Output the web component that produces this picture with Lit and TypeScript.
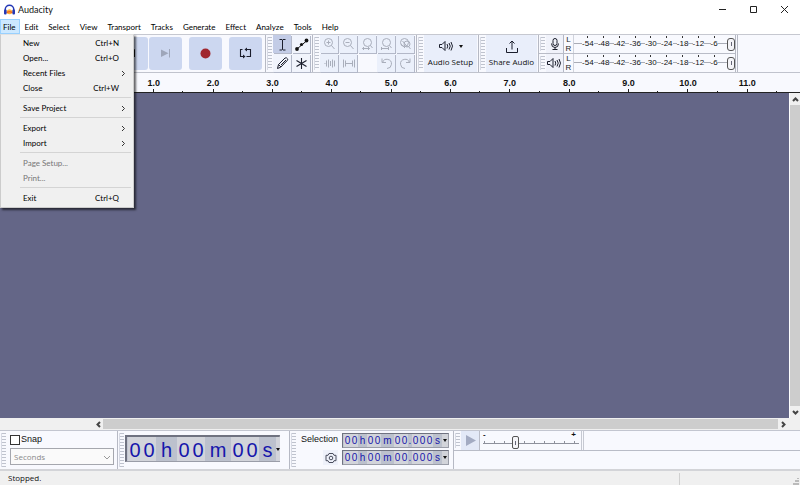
import { LitElement, html, svg, css } from "lit";
import { customElement, property } from "lit/decorators.js";

const MENUS = ["File", "Edit", "Select", "View", "Transport", "Tracks", "Generate", "Effect", "Analyze", "Tools", "Help"];

type Entry = { label: string; keys?: string; sub?: boolean; off?: boolean };
const FILE_MENU: Entry[][] = [
  [
    { label: "New", keys: "Ctrl+N" },
    { label: "Open...", keys: "Ctrl+O" },
    { label: "Recent Files", sub: true },
    { label: "Close", keys: "Ctrl+W" },
  ],
  [{ label: "Save Project", sub: true }],
  [{ label: "Export", sub: true }, { label: "Import", sub: true }],
  [{ label: "Page Setup...", off: true }, { label: "Print...", off: true }],
  [{ label: "Exit", keys: "Ctrl+Q" }],
];

const lens = svg`<circle cx="8.5" cy="7.5" r="4"/><path d="M11.500 10.500l3 3.500"/>`;

const ICONS = {
  logo: svg`<path d="M2.200 8V6.500a4.300 4.300 0 0 1 8.600 0V8" fill="none" stroke="#2337b5" stroke-width="1.500"/><path d="M3.500 8q3-3.500 6 0v2q-3 2.500-6 0z" fill="#fbb03a"/><path d="M3.500 9.500q3-1.500 6 0" fill="none" stroke="#e8501a" stroke-width="1.200"/><rect x="1" y="6.500" width="2.600" height="5" rx="1" fill="#2337b5"/><rect x="9.400" y="6.500" width="2.600" height="5" rx="1" fill="#2337b5"/>`,
  pause: svg`<path d="M11 9h4v14h-4zM18 9h4v14h-4z" fill="#111"/>`,
  play: svg`<path d="M11 9l12 7-12 7z" fill="#111"/>`,
  stop: svg`<path d="M11 11h10v10H11z" fill="#111"/>`,
  start: svg`<path d="M20 12v8l-7-4zM11 12h1v8h-1z" fill="#111"/><path d="M19 13h1v7h-1z" fill="#111"/>`,
  end: svg`<path d="M12 12.500l7.500 3.700-7.500 3.700z" fill="#9ea6ba"/><path d="M20.500 12v8.500" stroke="#9ea6ba"/>`,
  record: svg`<circle cx="16.500" cy="16.500" r="5" fill="#a0262e"/>`,
  loop: svg`<g fill="none" stroke="#1b1e2c" stroke-width="1.100"><path d="M13.500 12.500h-2v7h4M17.500 19.500h4v-7h-5"/></g><path d="M14 17.500l2.500 2-2.500 2zM18 10.500l-2.500 2 2.500 2z" fill="#1b1e2c"/>`,
  ibeam: svg`<path d="M6.500 4.500h2.500l.5.500.5-.5h2.500M9.500 5v9.500M6.500 15h2.500l.5-.5.5.500h2.500" fill="none" stroke="#1b1e2c"/>`,
  envelope: svg`<path d="M5 14l10-8.500" stroke="#111" stroke-width="1"/><circle cx="5" cy="14" r="1.900" fill="#111"/><circle cx="14.500" cy="5.500" r="1.900" fill="#111"/><circle cx="9.500" cy="9.500" r="1.600" fill="#111"/>`,
  pencil: svg`<path d="M4.500 14.500l1-4 6.500-6.500q1.500-.8 2.500.8.600 1-.3 1.800l-6.500 6.600zM5.500 10.500l2.500 2.500M8 11l5-5" fill="none" stroke="#1b1e2c"/>`,
  multi: svg`<path d="M9.500 4v11M4.500 6.500l10 6M14.500 6.500l-10 6" stroke="#1b1e2c" stroke-width="1.100"/>`,
  zoomin: svg`${lens}<path d="M6.500 7.500h4M8.500 5.500v4"/>`,
  zoomout: svg`${lens}<path d="M6.500 7.500h4"/>`,
  fitsel: svg`<circle cx="9.500" cy="7.500" r="4"/><path d="M12.500 10.500l2 2.500M4.500 13.500h7M6 12l-1.500 1.500L6 15M10 12l1.500 1.500L10 15"/>`,
  fitproj: svg`<circle cx="9.500" cy="7.500" r="4"/><path d="M12.500 10.500l2 2.500M4 13.500h8M4.500 12v3M11.500 12v3"/>`,
  toggle: svg`<circle cx="8.500" cy="7.500" r="4"/><circle cx="11" cy="9" r="3"/><path d="M6.500 6l5 6M12.500 11.500l2 2.500M5 9l4 4"/>`,
  trim: svg`<path d="M4.500 9.500h1M6.500 6.500v6M8.500 5.500v8M10.500 7v5M12.500 5.500v8M14.500 6.500v6"/>`,
  silence: svg`<path d="M4.500 5.500v8M6.500 6.500v6M6.500 9.500h7M13.500 6.500v6M15.500 5.500v8"/>`,
  undo: svg`<path d="M5 4.500v4h4M5.500 8.500a4.600 4.600 0 1 1 4.500 6"/>`,
  redo: svg`<path d="M14 4.500v4h-4M13.500 8.500a4.600 4.600 0 1 0-4.500 6"/>`,
  speaker: svg`<path d="M1.500 5.500H4l3-3v9l-3-3H1.500zM9 5q1.500 2 0 4.500M11 4q2.500 3 0 6.500M13 3q3 4 0 8.500" fill="none" stroke="#1b1e2c"/>`,
  share: svg`<path d="M2.500 9v4.500h11V9M8 10.500V2M5.500 4.500L8 2l2.500 2.500" fill="none" stroke="#1b1e2c"/>`,
  mic: svg`<rect x="5" y="1.500" width="4" height="7" rx="2" fill="none" stroke="#1b1e2c"/><path d="M3.500 6.500q0 4 3.500 4t3.500-4M7 10.500v2M4.500 12.500h5" fill="none" stroke="#1b1e2c"/>`,
  gear: svg`<path d="M4 1.500h4l1 1.800h2v5.400H9L8 10.500H4L3 8.700H1V3.300h2z" fill="none" stroke="#4a4e5e"/><circle cx="6" cy="6" r="1.800" fill="none" stroke="#4a4e5e"/>`,
};
type IconName = keyof typeof ICONS;

const icon = (name: IconName, w: number, h = w) =>
  html`<svg width=${w} height=${h} viewBox="0 0 ${w} ${h}" aria-hidden="true">${ICONS[name]}</svg>`;

const TRANSPORT: [IconName, string][] = [
  ["pause", "Pause"], ["play", "Play"], ["stop", "Stop"], ["start", "Skip to Start"], ["end", "Skip to End"],
];
const TOOLS: [IconName, string][] = [
  ["ibeam", "Selection Tool"], ["envelope", "Envelope Tool"], ["pencil", "Draw Tool"], ["multi", "Multi-Tool"],
];
const EDIT: ([IconName, string] | null)[] = [
  ["zoomin", "Zoom In"], ["zoomout", "Zoom Out"], ["fitsel", "Fit Selection"], ["fitproj", "Fit Project"], ["toggle", "Zoom Toggle"],
  ["trim", "Trim"], ["silence", "Silence"], null, ["undo", "Undo"], ["redo", "Redo"],
];

/** Level meter with its L/R labels, dB scale and volume handle. */
@customElement("level-meter")
class LevelMeter extends LitElement {
  @property() kind: "mic" | "speaker" = "mic";

  static styles = css`
    :host { display: flex; flex: 1; }
    button { all: unset; width: 17px; display: flex; align-items: center; justify-content: center; background: #f0f2fa; border-right: 1px solid #b4b8c6; }
    .lr { width: 9px; font-size: 8px; line-height: 9px; text-align: center; display: flex; flex-direction: column; justify-content: center; color: #222; }
    .bar { position: relative; flex: 1; display: flex; border-left: 1px solid #d0d3dc; padding: 0 13px 0 6px; }
    .scale { flex: 1; display: grid; grid-template-columns: repeat(9, 1fr); position: relative; z-index: 1; }
    .db { display: flex; flex-direction: column; align-items: center; font-size: 8px; line-height: 9px; color: #111; padding-top: 1px; }
    .db::before { content: ""; width: 1px; height: 2px; background: #333; margin-bottom: 1px; }
    .num { background: #f8f9fe; }
    input { position: absolute; inset: 0; margin: 0; width: 100%; height: 100%; appearance: none; background: linear-gradient(#a9acb6, #a9acb6) 0 8px / 100% 1px no-repeat; }
    input::-webkit-slider-thumb { appearance: none; width: 8px; height: 13px; box-sizing: border-box; border: 1px solid #555; border-radius: 3px; background: linear-gradient(#667, #667) center / 1px 4px no-repeat #f4f4f8; }
  `;

  render() {
    return html`
      <button aria-label=${this.kind === "mic" ? "Record Meter" : "Playback Meter"}>${icon(this.kind, this.kind === "mic" ? 14 : 17, 14)}</button>
      <div class="lr"><span>L</span><span>R</span></div>
      <div class="bar">
        <div class="scale">
          ${[-54, -48, -42, -36, -30, -24, -18, -12, -6].map((n) => html`<div class="db"><span class="num">${n}</span></div>`)}
        </div>
        <input type="range" min="0" max="100" value="100" aria-label="Volume" />
      </div>
    `;
  }
}

/** Numeric time display, alternating digit and unit fields. */
@customElement("time-field")
class TimeField extends LitElement {
  @property() parts = "";
  @property() label = "";
  @property({ type: Boolean, reflect: true }) large = false;

  static styles = css`
    :host { display: flex; box-sizing: border-box; height: 15px; border: 1px solid #9a9da8; border-top-color: #6f7280; border-left-color: #6f7280; background: #c3c7d2; color: #1616ab; font: 10px/14px "Liberation Sans", Arial, sans-serif; padding-left: 1px; }
    :host([large]) { height: 27px; font-size: 20px; line-height: 27px; border-width: 2px 1px 1px 2px; }
    .seg { display: flex; background: #d2d4da; }
    .seg.unit { background: #bcc1cd; }
    .ch { width: 7px; text-align: center; }
    .unit .ch { width: 9px; }
    .m .ch { width: 13px; }
    .dot .ch { width: 4px; }
    :host([large]) .ch { width: 14px; }
    :host([large]) .h .ch { width: 21px; }
    :host([large]) .m .ch { width: 26px; }
    :host([large]) .s .ch { width: 17px; }
    button { all: unset; flex: 1; background: #d2d4da; display: flex; align-items: center; justify-content: center; }
    button::before { content: ""; border: 2px solid transparent; border-top: 3px solid #111; border-bottom: 0; }
  `;

  render() {
    return html`
      ${this.parts.split(" ").map((p) => {
        const kind = /\d/.test(p) ? "" : p === "." ? "unit dot" : "unit " + p;
        return html`<span class="seg ${kind}">${[...p].map((c) => html`<span class="ch">${c}</span>`)}</span>`;
      })}
      <button aria-label=${this.label + " format"}></button>
    `;
  }
}

@customElement("app-root")
class AppRoot extends LitElement {
  static styles = css`
    :host { display: flex; flex-direction: column; min-height: 100vh; background: #f8f9fe; color: #111; font: 8px/15px "Open Sans", "Noto Sans", sans-serif; overflow: hidden; }
    button { all: unset; box-sizing: border-box; }
    svg { display: block; flex: none; }
    .title { display: flex; align-items: center; height: 19px; background: #fff; padding-left: 3px; }
    .name { flex: 1; font: 9px/18px Lato, sans-serif; margin-left: 2px; }
    .win { width: 31px; height: 19px; display: flex; align-items: center; justify-content: center; }
    .menubar { display: flex; position: relative; z-index: 2; height: 15px; background: #fff; font-family: Lato, "Open Sans", sans-serif; color: #000; }
    .top { padding: 1px 5px 0; line-height: 14px; }
    .top:first-child { padding: 1px 4px 0 3px; }
    .top.open { background: #cce8ff; box-shadow: inset 0 0 0 1px #99d1ff; }
    .menu { position: absolute; left: 0; top: 15px; width: 134px; box-sizing: border-box; background: #f0f0f0; border: 1px solid #ccc; border-top-color: #e2e2e2; padding-bottom: 2px; box-shadow: 2px 2px 2px #0009; }
    .group + .group { margin-top: 2px; }
    .group + .group::before { content: ""; display: block; height: 1px; background: #d4d4d4; margin: 0 2px 2px 19px; }
    .item { display: flex; align-items: center; width: 100%; height: 15px; padding: 1px 14px 0 22px; line-height: 14px; }
    .item.off { color: #777; }
    .lab { flex: 1; }
    .item.sub { padding-right: 6px; }
    .bars { display: flex; height: 39px; box-sizing: border-box; border-top: 1px solid #c6c8d0; border-bottom: 1px solid #c0c3cd; }
    .bar { display: flex; border-right: 1px solid #b6b9c4; padding-right: 2px; }
    .grip { width: 5px; margin: 2px 1px; flex: none; background: repeating-linear-gradient(#bfc3ce 0 1px, transparent 1px 3px); border-left: 1px solid #d7dae4; box-sizing: border-box; }
    .transport { align-items: center; gap: 1px; padding: 0 3px 0 5px; }
    .transport .grip { align-self: stretch; }
    .big { width: 33px; height: 33px; border-radius: 3px; background: #ccd7f0; display: flex; }
    .gap { margin-left: 6px; }
    .cells { display: grid; grid-auto-rows: 18px; gap: 1px; }
    .two { grid-template-columns: repeat(2, 18px); }
    .five { grid-template-columns: repeat(5, 18px); }
    .cell { background: #f1f4fc; box-shadow: 1px 1px 0 #b3b8c8; }
    .cell.on { background: #c3cce6; }
    .five .cell { fill: none; stroke: #a9aebb; background: #ebf0fb; }
    .card { display: flex; flex-direction: column; align-items: center; justify-content: space-between; background: #e9eefa; padding: 4px 0; line-height: 12px; text-align: center; }
    .slim { padding-right: 1px; }
    .setup { width: 53px; }
    .share { width: 51px; }
    .row { display: flex; align-items: center; gap: 4px; }
    .caret { border: 2px solid transparent; border-top: 3px solid #111; border-bottom: 0; }
    .meters { width: 196px; border-right: 3px double #b6b9c4; padding-right: 0; }
    .meters .stack { display: flex; flex-direction: column; flex: 1; font-family: "Liberation Sans", Arial, sans-serif; }
    .mrow { display: flex; flex: 1; }
    .mrow + .mrow { border-top: 1px solid #b9bcc7; }
    .ruler { display: grid; grid-template-columns: repeat(11, 1fr); height: 20px; box-sizing: border-box; padding: 0 23px 0 124px; border-bottom: 1px solid #222; font: bold 9px/20px "Liberation Sans", Arial, sans-serif; text-align: center; }
    .mark { background: linear-gradient(#222, #222) 50% 100% / 1px 4px no-repeat, linear-gradient(#222, #222) 100% 100% / 1px 2px no-repeat; }
    .work { flex: 1; display: grid; grid-template-columns: 1fr 11px; grid-template-rows: 1fr 12px; background: #f0f0f0; }
    .tracks { background: #646687; min-height: 100px; }
    .vs { display: flex; flex-direction: column; align-items: center; border-left: 1px solid #fff; }
    .hs { display: flex; align-items: center; padding: 1px 1px 1px 93px; }
    .thumb { flex: 1; background: #cdcdcd; align-self: stretch; }
    .arrow { width: 10px; height: 10px; display: flex; align-items: center; justify-content: center; }
    .vs .arrow { height: 12px; }
    .sub svg { fill: none; stroke: #333; stroke-width: 1; }
    .arrow svg { fill: none; stroke: #444; stroke-width: 2; }
    .bottom { display: flex; height: 39px; box-sizing: border-box; border-top: 1px solid #c3c6d0; font-family: "Liberation Sans", Arial, sans-serif; }
    .bottom .bar { padding: 0; }
    .snap { width: 118px; box-sizing: border-box; }
    .snapbox { display: flex; flex-direction: column; flex: 1; padding: 0 3px; }
    .check { display: flex; align-items: center; height: 17px; font-size: 9px; }
    .check input { appearance: none; width: 10px; height: 10px; margin: 0 1px 0 0; border: 1px solid #333; background: #fff; }
    .pick { display: flex; position: relative; }
    .pick svg { position: absolute; right: 3px; top: 7px; fill: none; stroke: #999; }
    select { appearance: none; width: 100%; height: 17px; border: 1px solid #a5a7ae; border-radius: 0; background: #fafafa; color: #8a8a8a; opacity: 1; font: 8px "Open Sans", sans-serif; padding: 0 3px; }
    .time time-field { width: 155px; margin: 4px 9px 0 0; }
    .selbox { display: grid; grid-template-columns: 44px 107px; column-gap: 1px; row-gap: 2px; align-content: start; padding: 2px 4px 0 0; font-size: 9px; }
    .selbox span, .gearbtn { justify-self: end; }
    .selbox span { line-height: 13px; padding-right: 3px; }
    .gearbtn { width: 15px; height: 15px; display: flex; align-items: center; justify-content: center; margin-right: 3px; background: #eef1fa; }
    .speedwrap { flex: 1; }
    .speed { display: flex; height: 19px; border-bottom: 1px solid #b9bcc7; }
    .playat { width: 19px; background: #e3e9f7; display: flex; align-items: center; justify-content: center; border-right: 1px solid #b9bcc7; }
    .slide { display: flex; position: relative; width: 104px; border-right: 3px double #c6c9d2; padding: 0 0 0 3px; box-sizing: border-box; }
    .pm { position: absolute; inset: 0 5px 0 3px; display: flex; justify-content: space-between; line-height: 8px; font-size: 8px; font-weight: bold; }
    .slide input { appearance: none; width: 96px; height: 18px; margin: 0; background: linear-gradient(#8e919c, #8e919c) 0 12px / 100% 1px no-repeat, repeating-linear-gradient(90deg, #8e919c 0 1px, transparent 1px 10px) 1px 10px / 100% 2px no-repeat; }
    .slide input::-webkit-slider-thumb { appearance: none; width: 7px; height: 13px; margin-top: 5px; box-sizing: border-box; border: 1px solid #555; border-radius: 2px; background: linear-gradient(#667, #667) center / 1px 4px no-repeat #f4f4f8; }
    .status { display: flex; height: 16px; box-sizing: border-box; border-top: 2px solid #d3d4d8; background: #f0f0f0; line-height: 13px; }
    .msg { flex: 1; padding-left: 8px; }
    .pane { width: 120px; display: flex; justify-content: flex-end; align-items: flex-end; border-left: 1px solid #d0d0d0; margin-top: 2px; }
  `;

  private chevron(d: string) {
    return html`<svg width="7" height="7" viewBox="0 0 7 7" aria-hidden="true"><path d=${d} /></svg>`;
  }

  render() {
    return html`
      <header class="title">
        ${icon("logo", 13)}<span class="name">Audacity</span>
        <button class="win" aria-label="Minimize"><svg width="9" height="9" viewBox="0 0 9 9"><path d="M1 4.500h7" stroke="#222" /></svg></button>
        <button class="win" aria-label="Maximize"><svg width="9" height="9" viewBox="0 0 9 9"><path d="M1.500 1.500h6v6h-6z" fill="none" stroke="#222" /></svg></button>
        <button class="win" aria-label="Close window"><svg width="9" height="9" viewBox="0 0 9 9"><path d="M1 1l7 7M8 1l-7 7" stroke="#222" /></svg></button>
      </header>
      <nav class="menubar">
        ${MENUS.map((m, i) => html`<button class="top ${i ? "" : "open"}">${m}</button>`)}
        <div class="menu" role="menu">
          ${FILE_MENU.map((g) => html`<div class="group">
            ${g.map((e) => html`<button role="menuitem" class="item ${e.off ? "off" : ""} ${e.sub ? "sub" : ""}" ?disabled=${e.off}>
              <span class="lab">${e.label}</span>${e.keys ? html`<span>${e.keys}</span>` : ""}${e.sub ? this.chevron("M2 1l2.500 2.500L2 6") : ""}
            </button>`)}
          </div>`)}
        </div>
      </nav>

      <section class="bars">
        <div class="bar transport">
          <div class="grip"></div>
          ${TRANSPORT.map(([n, l]) => html`<button class="big" aria-label=${l}>${icon(n, 33)}</button>`)}
          <button class="big gap" aria-label="Record">${icon("record", 33)}</button>
          <button class="big gap" aria-label="Loop">${icon("loop", 33)}</button>
        </div>
        <div class="bar">
          <div class="grip"></div>
          <div class="cells two">${TOOLS.map(([n, l], i) => html`<button class="cell ${i ? "" : "on"}" aria-label=${l}>${icon(n, 18)}</button>`)}</div>
        </div>
        <div class="bar">
          <div class="grip"></div>
          <div class="cells five">${EDIT.map((e) => (e ? html`<button class="cell" aria-label=${e[1]}>${icon(e[0], 18)}</button>` : html`<span></span>`))}</div>
        </div>
        <div class="bar slim">
          <div class="grip"></div>
          <button class="card setup"><span class="row">${icon("speaker", 17, 14)}<i class="caret"></i></span>Audio Setup</button>
        </div>
        <div class="bar slim">
          <div class="grip"></div>
          <button class="card share">${icon("share", 16, 15)}Share Audio</button>
        </div>
        <div class="bar meters">
          <div class="stack">
            <div class="mrow"><div class="grip"></div><level-meter kind="mic"></level-meter></div>
            <div class="mrow"><div class="grip"></div><level-meter kind="speaker"></level-meter></div>
          </div>
        </div>
      </section>

      <div class="ruler">
        ${Array.from({ length: 11 }, (_, i) => html`<span class="mark">${i + 1}.0</span>`)}
      </div>

      <main class="work">
        <div class="tracks"></div>
        <div class="vs">
          <button class="arrow" aria-label="Scroll up">${this.chevron("M1 5l2.500-2.500L6 5")}</button>
          <div class="thumb"></div>
          <button class="arrow" aria-label="Scroll down">${this.chevron("M1 2l2.500 2.500L6 2")}</button>
        </div>
        <div class="hs">
          <button class="arrow" aria-label="Scroll left">${this.chevron("M5 1L2.500 3.500 5 6")}</button>
          <div class="thumb"></div>
          <button class="arrow" aria-label="Scroll right">${this.chevron("M2 1l2.500 2.500L2 6")}</button>
        </div>
      </main>

      <section class="bottom">
        <div class="bar snap">
          <div class="grip"></div>
          <div class="snapbox">
            <label class="check"><input type="checkbox" />Snap</label>
            <div class="pick">
              <select disabled aria-label="Snap unit"><option>Seconds</option></select>
              <svg width="8" height="5" viewBox="0 0 8 5"><path d="M1 1l3 3 3-3" /></svg>
            </div>
          </div>
        </div>
        <div class="bar time">
          <div class="grip"></div>
          <time-field large label="Time" parts="00 h 00 m 00 s"></time-field>
        </div>
        <div class="bar">
          <div class="grip"></div>
          <div class="selbox">
            <span>Selection</span>
            <time-field label="Start" parts="00 h 00 m 00 . 000 s"></time-field>
            <button class="gearbtn" aria-label="Selection options">${icon("gear", 12)}</button>
            <time-field label="End" parts="00 h 00 m 00 . 000 s"></time-field>
          </div>
        </div>
        <div class="speedwrap">
          <div class="speed">
            <div class="grip"></div>
            <button class="playat" aria-label="Play at Speed"><svg width="11" height="11" viewBox="0 0 11 11"><path d="M1 0l10 5.500L1 11z" fill="#a3abc2" /></svg></button>
            <div class="slide">
              <div class="pm"><span>-</span><span>+</span></div>
              <input type="range" min="0" max="100" value="33" aria-label="Playback speed" />
            </div>
          </div>
        </div>
      </section>

      <footer class="status">
        <span class="msg">Stopped.</span>
        <div class="pane"><svg width="8" height="8" viewBox="0 0 8 8"><path d="M5 1h2v1H5zM3 3h2v2H3zM5 3h2v2H5zM1 6h2v2H1zM3 6h2v2H3zM5 6h2v2H5z" fill="#bbb" /></svg></div>
      </footer>
    `;
  }
}
